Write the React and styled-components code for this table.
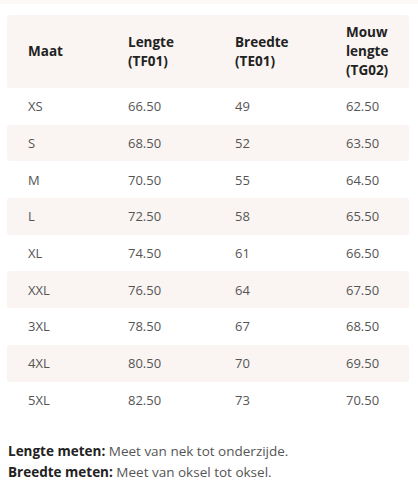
import React from "react";
import styled, { createGlobalStyle } from "styled-components";

const Global = createGlobalStyle`
  html, body { margin: 0; padding: 0; background: #fff; }
  body { font-family: "Open Sans", "Liberation Sans", sans-serif; }
`;

const Page = styled.div`
  width: 418px;
  height: 494px;
  box-sizing: border-box;
  display: flex;
  flex-direction: column;
`;

const TopStrip = styled.div`
  height: 4px;
  background: #fbf8f6;
`;

const Table = styled.div`
  margin: 11px 9px 0 7px;
  display: flex;
  flex-direction: column;
`;

const Row = styled.div`
  display: grid;
  grid-template-columns: 100px 107px 111px 1fr;
  align-items: center;
  height: ${(p) => p.$h}px;
  background: ${(p) => (p.$shade ? "#faf5f2" : "transparent")};
  border-radius: 2px;
`;

const HeadCell = styled.div`
  padding-left: 21px;
  font-weight: 700;
  font-size: 13.5px;
  line-height: 19px;
  color: #222;
`;

const Cell = styled.div`
  padding-left: 21px;
  font-size: 13px;
  color: #555;
`;

const Notes = styled.div`
  margin: 24px 0 0 8px;
  display: flex;
  flex-direction: column;
  gap: 2px;
  font-size: 13.5px;
  line-height: 19px;
  color: #555;
`;

const Strong = styled.b`
  font-weight: 700;
  color: #222;
`;

const rows = [
  ["XS", "66.50", "49", "62.50"],
  ["S", "68.50", "52", "63.50"],
  ["M", "70.50", "55", "64.50"],
  ["L", "72.50", "58", "65.50"],
  ["XL", "74.50", "61", "66.50"],
  ["XXL", "76.50", "64", "67.50"],
  ["3XL", "78.50", "67", "68.50"],
  ["4XL", "80.50", "70", "69.50"],
  ["5XL", "82.50", "73", "70.50"],
];

export default function App() {
  return (
    <Page>
      <Global />
      <TopStrip />
      <Table>
        <Row $h={73} $shade>
          <HeadCell>Maat</HeadCell>
          <HeadCell>Lengte<br />(TF01)</HeadCell>
          <HeadCell>Breedte<br />(TE01)</HeadCell>
          <HeadCell>Mouw<br />lengte<br />(TG02)</HeadCell>
        </Row>
        {rows.map((r, i) => (
          <Row key={r[0]} $h={36.7} $shade={i % 2 === 1}>
            {r.map((c, j) => (
              <Cell key={j}>{c}</Cell>
            ))}
          </Row>
        ))}
      </Table>
      <Notes>
        <div><Strong>Lengte meten:</Strong> Meet van nek tot onderzijde.</div>
        <div><Strong>Breedte meten:</Strong> Meet van oksel tot oksel.</div>
      </Notes>
    </Page>
  );
}
